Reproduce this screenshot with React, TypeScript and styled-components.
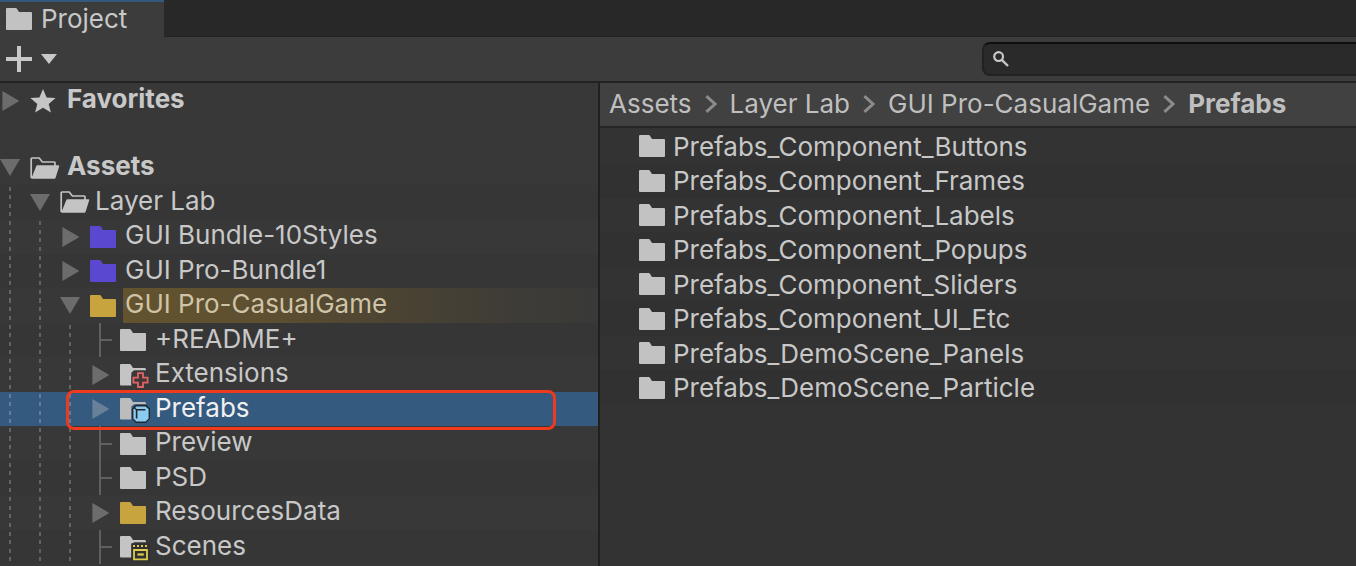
import React from "react";
import styled, { createGlobalStyle, css } from "styled-components";

const GlobalStyle = createGlobalStyle`
  *, *::before, *::after { box-sizing: border-box; }
  body {
    margin: 0;
    background: #383838;
    color: #c8c8c8;
    font-family: Inter, "Liberation Sans", sans-serif;
    font-size: 26px;
  }
  button, input { font: inherit; color: inherit; }
  svg { display: block; overflow: visible; flex: none; }
`;

const plainButton = css`
  display: flex;
  align-items: center;
  border: 0;
  padding: 0;
  background: none;
  text-align: left;
  white-space: nowrap;
  cursor: pointer;
`;

const Window = styled.div`
  display: flex;
  flex-direction: column;
  height: 100vh;
  overflow: hidden;
`;

const TabBar = styled.header`
  display: flex;
  flex: none;
  height: 37px;
  background: #282828;
  box-shadow: inset 0 -1px #222;
`;

const Tab = styled.button`
  ${plainButton}
  gap: 9px;
  padding: 0 37px 0 6px;
  background: #3c3c3c;
  box-shadow: inset 0 2px #34597c;
`;

const Toolbar = styled.div`
  display: flex;
  flex: none;
  align-items: center;
  height: 46px;
  padding-left: 6px;
  background: #3c3c3c;
  border-bottom: 2px solid #222;
`;

const CreateButton = styled.button`
  ${plainButton}
  gap: 9px;
`;

const SearchField = styled.label`
  display: flex;
  align-items: center;
  gap: 8px;
  width: 374px;
  height: 34px;
  margin-left: auto;
  padding-left: 9px;
  background: #2a2a2a;
  border: 2px solid #212121;
  border-top-color: #0e0e0e;
  border-right: 0;
  border-radius: 8px 0 0 8px;
`;

const SearchInput = styled.input`
  flex: 1;
  min-width: 0;
  padding: 0;
  border: 0;
  outline: 0;
  background: none;
  font-size: 20px;
`;

const Panes = styled.main`
  display: flex;
  flex: 1;
  min-height: 0;
`;

const TreePane = styled.nav`
  flex: 0 0 600px;
  border-right: 2px solid #202020;
  background: #383838;
  overflow: hidden;
`;

const ContentPane = styled.section`
  flex: 1;
  min-width: 0;
  background: #333;
`;

const FavoritesList = styled.ul`
  margin: 0 0 32px;
  padding: 0;
  list-style: none;
`;

const RowList = styled.ul`
  margin: 0;
  padding: 0;
  list-style: none;
`;

const TreeItem = styled.li<{ $selected?: boolean }>`
  position: relative;
  height: 35px;
  background: ${(p) => (p.$selected ? "#345a80" : "#383838")};
  &:nth-child(even) {
    height: 34px;
    background: ${(p) => (p.$selected ? "#345a80" : "#363636")};
  }
`;

const TreeButton = styled.button`
  ${plainButton}
  width: 100%;
  height: 100%;
`;

const Guide = styled.span`
  flex: none;
  align-self: stretch;
  width: 2px;
  margin: 0 19px 0 9px;
  background: repeating-linear-gradient(
    to bottom,
    transparent 0 5%,
    rgba(255, 255, 255, 0.22) 5% 17%,
    transparent 17% 25%
  );
`;

const Toggle = styled.span<{ $selected?: boolean }>`
  display: flex;
  flex: none;
  align-items: center;
  width: 30px;
  color: ${(p) => (p.$selected ? "#688098" : "#6c6c6c")};
`;

const Branch = styled.span`
  display: flex;
  flex: none;
  align-items: center;
  align-self: stretch;
  width: 21px;
  margin: 0 0 0 9px;
  border-left: 2px solid #606060;
  &::after {
    content: "";
    width: 11px;
    height: 2px;
    background: #606060;
  }
`;

const IconSlot = styled.span`
  display: flex;
  flex: none;
  width: 33px;
`;

const TreeLabel = styled.span<{ $root?: boolean; $selected?: boolean; $marked?: boolean }>`
  display: flex;
  flex: 1;
  align-items: center;
  align-self: stretch;
  padding: 0 0 4px ${(p) => (p.$root ? 4 : 2)}px;
  font-weight: ${(p) => (p.$root ? 700 : 400)};
  color: ${(p) => (p.$selected ? "#f0f0f0" : p.$marked ? "#cfc4a8" : "#c8c8c8")};
  ${(p) =>
    p.$marked &&
    css`
      background: linear-gradient(90deg, #63532f 0%, #5d4f30 30%, #4c4433 56%, #403d36 78%, #393938 100%);
    `}
`;

const Callout = styled.span`
  position: absolute;
  top: -2px;
  right: 42px;
  bottom: -4px;
  left: 66px;
  z-index: 1;
  border: 3px solid #f03a1d;
  border-radius: 8px;
  pointer-events: none;
`;

const Breadcrumb = styled.nav`
  display: flex;
  align-items: center;
  height: 45px;
  margin-bottom: 1px;
  padding: 0 0 2px 9px;
  background: #414141;
  border-bottom: 2px solid #262626;
  white-space: nowrap;
  svg { margin: 0 13px; }
`;

const Crumb = styled.a<{ $current?: boolean }>`
  color: #bfbfbf;
  font-weight: ${(p) => (p.$current ? 700 : 400)};
  text-decoration: none;
`;

const ContentItem = styled.li`
  height: 34px;
  background: #333;
  &:nth-child(even) {
    height: 35px;
    background: #313131;
  }
`;

const ContentButton = styled.button`
  ${plainButton}
  gap: 8px;
  width: 100%;
  height: 100%;
  padding-left: 39px;
`;

const FOLDER = "M1 0H9.6Q10.6 0 11.1 .9L13 4H25Q26 4 26 5V21Q26 22 25 22H1Q0 22 0 21V1Q0 0 1 0Z";
const CUT_FOLDER = "M1 0H9.6Q10.6 0 11.1 .9L13 4H25L26 5V6.2H14.2L11.4 8.6V21.4H1Q0 21.4 0 20.4V1Q0 0 1 0Z";

const Folder = ({ color = "#c2c2c2" }: { color?: string }) => (
  <svg width="26" height="22" viewBox="0 0 26 22" aria-hidden="true">
    <path d={FOLDER} fill={color} />
  </svg>
);

const OpenFolder = () => (
  <svg width="30" height="22" viewBox="0 0 30 22" aria-hidden="true">
    <path d="M1.2 21V1.8Q1.2 1 2 1H9.2L12.4 5H24.2Q25 5 25 5.8V9" fill="none" stroke="#c4c4c4" strokeWidth="1.7" />
    <path d="M7.4 8.2H28.4Q29.5 8.2 29.2 9.2L25.6 20.8Q25.3 21.8 24.3 21.8H1.2L6.2 9.2Q6.6 8.2 7.4 8.2Z" fill="#c4c4c4" />
  </svg>
);

const ExtensionsFolder = () => (
  <svg width="26" height="22" viewBox="0 0 26 22" aria-hidden="true">
    <path d={CUT_FOLDER} fill="#c4c4c4" />
    <path
      d="M18 9.2H23V13.6H27.6V18.6H23V23H18V18.6H13.4V13.6H18Z"
      fill="#3a3434"
      stroke="#383838"
      strokeWidth="4"
    />
    <path
      d="M18 9.2H23V13.6H27.6V18.6H23V23H18V18.6H13.4V13.6H18Z"
      fill="#453636"
      stroke="#e06468"
      strokeWidth="1.8"
    />
  </svg>
);

const PrefabFolder = () => (
  <svg width="26" height="22" viewBox="0 0 26 22" aria-hidden="true">
    <path d={CUT_FOLDER} fill="#bcbcbc" />
    <path d="M16 6.8H26L30 10.6V20.6L26 25H16L11.8 20.8V11Z" fill="#20262b" />
    <path d="M16.4 8.4H25.6L28.6 11.2V20.4L25.6 23.4H16.4L13.4 20.4V11.4Z" fill="#8acbf1" />
    <path d="M16.6 20.6V11.8H25.4" fill="none" stroke="#20262b" strokeWidth="1.6" />
    <path d="M14 9.4L16.6 11.8" fill="none" stroke="#20262b" strokeWidth="1.2" />
  </svg>
);

const ScenesFolder = () => (
  <svg width="26" height="22" viewBox="0 0 26 22" aria-hidden="true">
    <path d={CUT_FOLDER} fill="#c4c4c4" />
    <path d="M11.4 7.2H30V25.4H11.4Z" fill="#303030" />
    <path d="M13 9h2v2h-2ZM17 9h2v2h-2ZM21 9h2v2h-2ZM25 9h2v2h-2Z" fill="#dccb4c" />
    <path d="M14 14H27V23.4H14Z" fill="none" stroke="#dccb4c" strokeWidth="1.8" />
    <path d="M17.4 17.4H23.8V19.6H17.4Z" fill="#dccb4c" />
  </svg>
);

const Star = () => (
  <svg width="26" height="24" viewBox="0 0 26 24" aria-hidden="true">
    <path d="M13 0L16.6 8.4L25.6 9.1L18.7 14.9L20.9 23.5L13 18.8L5.1 23.5L7.3 14.9L.4 9.1L9.4 8.4Z" fill="#c6c6c6" />
  </svg>
);

const ArrowRight = () => (
  <svg width="20" height="20" viewBox="0 0 20 20" aria-hidden="true">
    <path d="M2.4 0L19.4 10L2.4 20Z" fill="currentColor" />
  </svg>
);

const ArrowDown = () => (
  <svg width="20" height="17" viewBox="0 0 20 17" aria-hidden="true">
    <path d="M0 0H20L10 17Z" fill="currentColor" />
  </svg>
);

const Chevron = () => (
  <svg width="12" height="18" viewBox="0 0 12 18" aria-hidden="true">
    <path d="M1.4 1.2L10 9L1.4 16.8" fill="none" stroke="#8c8c8c" strokeWidth="3" />
  </svg>
);

const Plus = () => (
  <svg width="26" height="26" viewBox="0 0 26 26" aria-hidden="true">
    <path d="M11 0H15V11H26V15H15V26H11V15H0V11H11Z" fill="#c8c8c8" />
  </svg>
);

const Caret = () => (
  <svg width="16" height="10" viewBox="0 0 16 10" aria-hidden="true">
    <path d="M0 0H16L8 10Z" fill="#c8c8c8" />
  </svg>
);

const Magnifier = () => (
  <svg width="16" height="16" viewBox="0 0 16 16" aria-hidden="true">
    <circle cx="5.6" cy="5.6" r="4.4" fill="none" stroke="#c8c8c8" strokeWidth="2.2" />
    <path d="M8.8 8.8L15 15" stroke="#c8c8c8" strokeWidth="2.4" />
  </svg>
);

type Node = {
  name: string;
  depth: number;
  state: "open" | "closed" | "leaf";
  icon: React.ReactNode;
  selected?: boolean;
  marked?: boolean;
};

const PURPLE = "#5b48d0";
const GOLD = "#c8a43e";

const tree: Node[] = [
  { name: "Assets", depth: 0, state: "open", icon: <OpenFolder /> },
  { name: "Layer Lab", depth: 1, state: "open", icon: <OpenFolder /> },
  { name: "GUI Bundle-10Styles", depth: 2, state: "closed", icon: <Folder color={PURPLE} /> },
  { name: "GUI Pro-Bundle1", depth: 2, state: "closed", icon: <Folder color={PURPLE} /> },
  { name: "GUI Pro-CasualGame", depth: 2, state: "open", icon: <Folder color={GOLD} />, marked: true },
  { name: "+README+", depth: 3, state: "leaf", icon: <Folder /> },
  { name: "Extensions", depth: 3, state: "closed", icon: <ExtensionsFolder /> },
  { name: "Prefabs", depth: 3, state: "closed", icon: <PrefabFolder />, selected: true },
  { name: "Preview", depth: 3, state: "leaf", icon: <Folder /> },
  { name: "PSD", depth: 3, state: "leaf", icon: <Folder /> },
  { name: "ResourcesData", depth: 3, state: "closed", icon: <Folder color={GOLD} /> },
  { name: "Scenes", depth: 3, state: "leaf", icon: <ScenesFolder /> },
];

const contents = [
  "Prefabs_Component_Buttons",
  "Prefabs_Component_Frames",
  "Prefabs_Component_Labels",
  "Prefabs_Component_Popups",
  "Prefabs_Component_Sliders",
  "Prefabs_Component_UI_Etc",
  "Prefabs_DemoScene_Panels",
  "Prefabs_DemoScene_Particle",
];

const path = ["Assets", "Layer Lab", "GUI Pro-CasualGame", "Prefabs"];

function TreeRow({ node }: { node: Node }) {
  return (
    <TreeItem $selected={node.selected}>
      <TreeButton type="button">
        {Array.from({ length: node.depth }, (_, i) => (
          <Guide key={i} />
        ))}
        {node.state === "leaf" ? (
          <Branch />
        ) : (
          <Toggle $selected={node.selected}>{node.state === "open" ? <ArrowDown /> : <ArrowRight />}</Toggle>
        )}
        <IconSlot>{node.icon}</IconSlot>
        <TreeLabel $root={node.depth === 0} $selected={node.selected} $marked={node.marked}>
          {node.name}
        </TreeLabel>
      </TreeButton>
      {node.selected && <Callout />}
    </TreeItem>
  );
}

export default function App() {
  return (
    <Window>
      <GlobalStyle />
      <TabBar>
        <Tab type="button">
          <Folder />
          Project
        </Tab>
      </TabBar>
      <Toolbar>
        <CreateButton type="button" aria-label="Create">
          <Plus />
          <Caret />
        </CreateButton>
        <SearchField>
          <Magnifier />
          <SearchInput type="text" aria-label="Search" />
        </SearchField>
      </Toolbar>
      <Panes>
        <TreePane aria-label="Folders">
          <FavoritesList>
            <TreeItem>
              <TreeButton type="button">
                <Toggle>
                  <ArrowRight />
                </Toggle>
                <IconSlot>
                  <Star />
                </IconSlot>
                <TreeLabel $root>Favorites</TreeLabel>
              </TreeButton>
            </TreeItem>
          </FavoritesList>
          <RowList>
            {tree.map((node) => (
              <TreeRow key={node.name} node={node} />
            ))}
          </RowList>
        </TreePane>
        <ContentPane>
          <Breadcrumb aria-label="Path">
            {path.map((name, i) => (
              <React.Fragment key={name}>
                {i > 0 && <Chevron />}
                <Crumb href="#" $current={i === path.length - 1}>
                  {name}
                </Crumb>
              </React.Fragment>
            ))}
          </Breadcrumb>
          <RowList>
            {contents.map((name) => (
              <ContentItem key={name}>
                <ContentButton type="button">
                  <Folder />
                  {name}
                </ContentButton>
              </ContentItem>
            ))}
          </RowList>
        </ContentPane>
      </Panes>
    </Window>
  );
}
